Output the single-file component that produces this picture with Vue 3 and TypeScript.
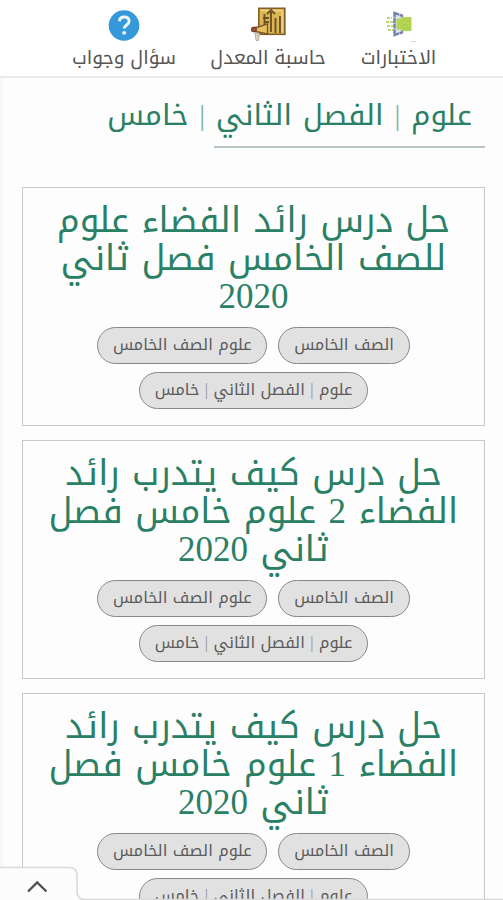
<script setup lang="ts">
interface Lesson {
  id: number
  lines: string[]
}

const lessons: Lesson[] = [
  { id: 1, lines: ['حل درس رائد الفضاء علوم', 'للصف الخامس فصل ثاني', '2020'] },
  { id: 2, lines: ['حل درس كيف يتدرب رائد', 'الفضاء 2 علوم خامس فصل', 'ثاني 2020'] },
  { id: 3, lines: ['حل درس كيف يتدرب رائد', 'الفضاء 1 علوم خامس فصل', 'ثاني 2020'] },
]

const unit: string[] = ['علوم', 'الفصل الثاني', 'خامس']
const tags: string[][] = [['الصف الخامس'], ['علوم الصف الخامس'], unit]
</script>

<template>
  <div class="page" dir="rtl">
    <nav class="nav">
      <a class="item exams">
        <svg class="icon" width="34" height="36" viewBox="0 0 34 36">
          <path d="M12.500 6 20 8.500v17L12.500 28z" fill="#dfe5f2" stroke="#7482a8" stroke-width="2.400" stroke-dasharray="5 .6" />
          <path d="M14.500 11.500H19V10h10.500v14H19V22.500h-4.500z" fill="#b4d552" />
          <path d="M5 11h5M4 15h7M5 19h6M6 23h5" stroke="#bcd77d" stroke-width="1.800" stroke-dasharray="3 1" />
          <path d="M20 14h8M19 18h9M20 21h8" stroke="#a9cd4e" stroke-width="1" />
          <path d="M29 34.500h5" stroke="#d6d9d6" stroke-width="1" />
        </svg>
        <span class="label">الاختبارات</span>
      </a>
      <a class="item gpa">
        <svg class="icon" width="36" height="36" viewBox="0 0 36 36">
          <rect x="8.800" y="1.300" width="26" height="26" fill="#dcb654" stroke="#805e26" stroke-width="1.600" />
          <path d="M10.500 3.500h22M32 4v22" stroke="#f0d57d" stroke-width="1.500" />
          <path d="M14.500 7v12M21 5v20M25.500 11v15M30 9v17M13 11h6M17 7l4-4 4 4M14 15h5" fill="none" stroke="#6c5127" stroke-width="1.900" />
          <path d="M2 21 8 20l9.500-3v10L8 25l-6-1z" fill="#e6be5c" stroke="#765329" stroke-width="1.300" />
          <circle cx="4" cy="22.500" r="2.500" fill="#a84732" stroke="#65462c" />
          <path d="M5 26h4.500l-1 7.500H6z" fill="#d8d1bd" stroke="#a39a82" stroke-width=".7" />
        </svg>
        <span class="label">حاسبة المعدل</span>
      </a>
      <a class="item faq">
        <svg class="icon" width="32" height="36" viewBox="0 0 32 36">
          <circle cx="16" cy="18.500" r="15.300" fill="#3498db" />
          <path d="M11.300 14.200c.5-3 2.300-4.200 4.900-4.200 3 0 4.900 1.700 4.900 4.200 0 3.900-4.900 3.700-4.900 7.400" fill="none" stroke="#f1f8fc" stroke-width="2.900" />
          <circle cx="16.200" cy="25.800" r="1.900" fill="#f1f8fc" />
        </svg>
        <span class="label">سؤال وجواب</span>
      </a>
    </nav>

    <main class="content">
      <header class="heading">
        <h1><template v-for="(part, i) in unit" :key="part"><span v-if="i" class="bar"> | </span>{{ part }}</template></h1>
      </header>
      <article v-for="lesson in lessons" :key="lesson.id" class="card">
        <h2><span v-for="line in lesson.lines" :key="line" class="line">{{ line }}</span></h2>
        <div class="tags">
          <a v-for="(tag, n) in tags" :key="n" class="tag"><template v-for="(part, i) in tag" :key="part"><span v-if="i" class="bar"> | </span>{{ part }}</template></a>
        </div>
      </article>
    </main>

    <div class="drawer">
      <svg class="drawer-shape" width="503" height="36" viewBox="0 0 503 36">
        <path d="M-2 3.500H69Q77 3.500 77 11V27Q77 35.500 85 35.500H505V40H-2z" fill="#fcfcfc" stroke="#dadada" stroke-width="1.600" />
        <path d="m28 27.500 9.200-9 9.200 9" fill="none" stroke="#505050" stroke-width="2.400" />
      </svg>
    </div>
  </div>
</template>

<style>
body { margin: 0; background: #fdfdfd; }
</style>

<style scoped>
.page {
  position: relative;
  box-sizing: border-box;
  width: 503px;
  height: 900px;
  overflow: hidden;
  background: #fdfdfd;
  font-family: 'Liberation Serif', 'Noto Kufi Arabic', serif;
}
.nav {
  box-sizing: border-box;
  height: 78px;
  padding: 7px 66px 0 0;
  display: flex;
  align-items: flex-start;
  background: #fff;
  border-bottom: 2px solid #e9ebe9;
  color: #555;
}
.item { display: flex; flex-direction: column; align-items: center; white-space: nowrap; }
.exams { width: 77px; }
.gpa { width: 116px; margin-right: 34px; }
.faq { width: 106px; margin-right: 33px; }
.icon { display: block; }
.label { font-size: 19px; line-height: 30px; word-spacing: 1px; }
.content { padding: 0 18px 0 20px; border-left: 2px solid #f7f7f7; }
.heading {
  box-sizing: border-box;
  width: 271px;
  height: 70px;
  border-bottom: 2px solid #b7c4c0;
  margin-bottom: 39px;
  padding: 12px 13px 0 0;
}
h1 { margin: 0; width: 400px; font-size: 29.500px; line-height: 50px; font-weight: 400; color: #2a8065; white-space: nowrap; word-spacing: 3.500px; }
.bar { opacity: .6; }
.card {
  box-sizing: border-box;
  width: 463px;
  height: 239px;
  margin-bottom: 14px;
  padding-top: 14px;
  border: 1px solid #c9c9c9;
  background: #fdfdfd;
}
h2 { margin: 0; color: #2a8065; font-size: 35px; font-weight: 400; text-align: center; word-spacing: 3.700px; }
.line { display: block; height: 38px; line-height: 38px; white-space: nowrap; }
.tags { display: flex; flex-wrap: wrap; justify-content: center; gap: 8px 11px; padding: 11px 60px 0; }
.tag {
  box-sizing: border-box;
  height: 37px;
  padding: 0 14.800px;
  border: 1px solid #888;
  border-radius: 19px;
  background: #e1e1e1;
  color: #5c5c5c;
  font-size: 16.200px;
  line-height: 34px;
  white-space: nowrap;
  word-spacing: 1.400px;
}
.drawer { position: absolute; left: 0; bottom: 0; width: 503px; height: 36px; }
.drawer-shape { display: block; }
</style>
